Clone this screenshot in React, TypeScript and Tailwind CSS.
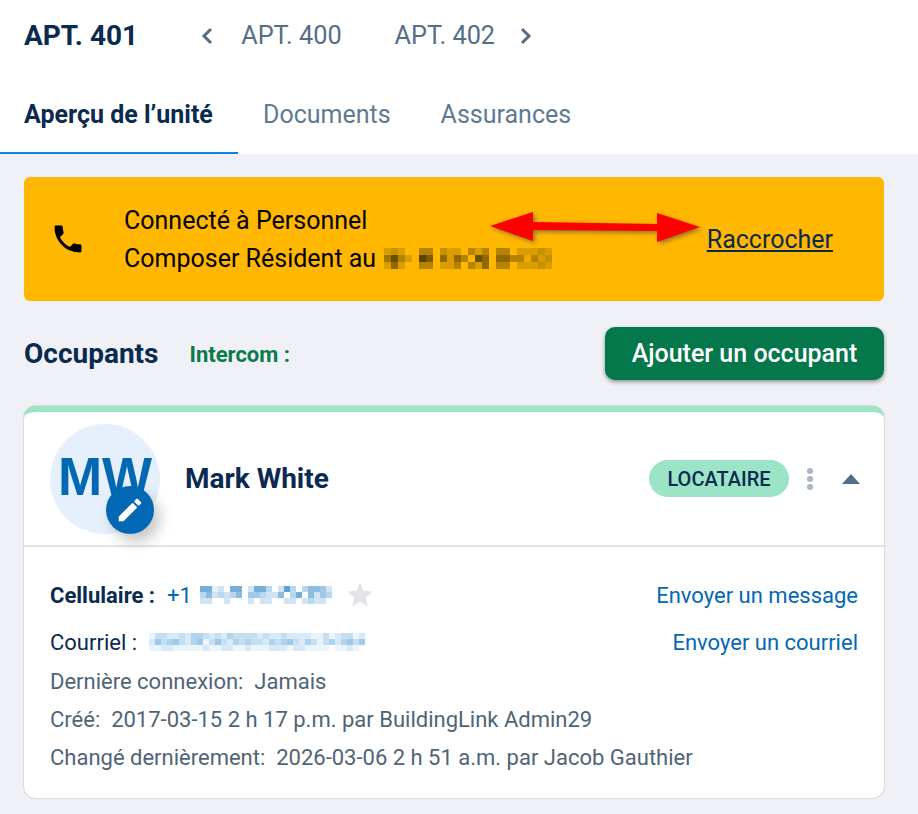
const NAVY = "text-[#0b2a4f]";

// blurred-out values in the screenshot: each digit is the strength of one cell
function Pixels({ rows, cell, color, className }: { rows: string[]; cell: number; color: string; className?: string }) {
  const w = rows[0].length * cell;
  const h = rows.length * cell;
  return (
    <svg width={w} height={h} viewBox={`0 0 ${w} ${h}`} className={className} shapeRendering="crispEdges">
      {rows.map((row, y) =>
        row.split("").map((c, x) => (
          <rect key={`${x}-${y}`} x={x * cell} y={y * cell} width={cell} height={cell} fill={color} opacity={Number(c) / 9} />
        ))
      )}
    </svg>
  );
}

function Arrow() {
  return (
    <svg
      width="214"
      height="34"
      viewBox="0 0 214 34"
      className="absolute left-[466px] top-[35px] drop-shadow-[2px_2px_2px_rgba(60,60,80,0.55)]"
    >
      <path d="M0 14 L43 0 V10 L167 12 V1 L210 15 L167 30 V19 L43 18 V29 Z" fill="#ff0000" />
    </svg>
  );
}

export default function App() {
  return (
    <div className="w-[918px] h-[814px] overflow-hidden bg-[#eff1f6] font-['Roboto',sans-serif]">
      {/* Header */}
      <div className="bg-white h-[154px]">
        <div className="flex items-center h-[72px] pl-6">
          <h1 className={`text-[28px] font-bold ${NAVY}`}>APT. 401</h1>
          <svg width="24" height="24" viewBox="0 0 24 24" fill="none" stroke="#546e85" strokeWidth="3" className="ml-[58px]">
            <path d="M15 5 L8 12 L15 19" />
          </svg>
          <span className="ml-[21px] text-[25.3px] text-[#546e85]">APT. 400</span>
          <span className="ml-[53px] text-[25.3px] text-[#546e85]">APT. 402</span>
          <svg width="24" height="24" viewBox="0 0 24 24" fill="none" stroke="#546e85" strokeWidth="3" className="ml-[18px]">
            <path d="M9 5 L16 12 L9 19" />
          </svg>
        </div>
        <div className="flex h-[82px]">
          <div className={`w-[238px] pl-6 pt-6 border-b-2 border-[#0a84e0] text-[25px] font-bold ${NAVY}`}>
            Aperçu de l’unité
          </div>
          <div className="ml-[25px] pt-6 text-[25px] text-[#5f7a90]">Documents</div>
          <div className="ml-[50px] pt-6 text-[25px] text-[#5f7a90]">Assurances</div>
        </div>
      </div>

      <div className="pl-6 pr-[34px] pt-[23px]">
        {/* Call banner */}
        <div className="relative flex items-center h-[124px] rounded-md bg-[#ffb700] pl-[26px] pr-[51px]">
          <svg width="36" height="36" viewBox="0 0 24 24" fill="#000">
            <path d="M6.62 10.79c1.44 2.83 3.76 5.14 6.59 6.59l2.2-2.2c.27-.27.67-.36 1.02-.24 1.12.37 2.33.57 3.57.57.55 0 1 .45 1 1V20c0 .55-.45 1-1 1-9.39 0-17-7.61-17-17 0-.55.45-1 1-1h3.5c.55 0 1 .45 1 1 0 1.25.2 2.45.57 3.57.11.35.03.74-.25 1.02l-2.2 2.2z" />
          </svg>
          <div className="ml-[38px] pt-[1px] text-[25px] leading-[38px] text-black">
            <p>Connecté à Personnel</p>
            <p className="flex items-center">
              Composer Résident au
              <Pixels
                className="ml-2"
                cell={7}
                color="#5a4100"
                rows={["232004403220424044022232", "584209706264086066441423", "262004402240426044022232"]}
              />
            </p>
          </div>
          <a className={`ml-auto pt-[2px] text-[25px] underline ${NAVY}`}>Raccrocher</a>
          <Arrow />
        </div>

        {/* Occupants title row */}
        <div className="flex items-center h-[53px] mt-[26px]">
          <h2 className={`text-[28px] font-bold ${NAVY}`}>Occupants</h2>
          <span className="ml-[31px] pt-[1px] text-[22px] font-bold text-[#0b7a4b]">Intercom :</span>
          <button className="ml-auto w-[279px] h-[53px] rounded-[10px] bg-[#04784a] pt-[1px] text-[25px] font-medium text-white shadow-[0_2px_4px_rgba(0,0,0,0.4)]">
            Ajouter un occupant
          </button>
        </div>

        {/* Occupant card */}
        <div className="mt-[26px] h-[392px] rounded-xl border-t-[6px] border-[#9be4c6] bg-white shadow-[0_0_2px_rgba(0,0,0,0.3)]">
          <div className="flex items-center h-[135px] border-b-2 border-[#e2e3e6] pl-[26px] pr-6">
            <div className="relative flex items-center justify-center w-[110px] h-[110px] rounded-full bg-[#e5f0fc] pb-1 text-[53px] font-['Liberation_Sans',sans-serif] font-bold text-[#0368b4]">
              MW
              <div className="absolute left-[56px] top-[62px] flex items-center justify-center w-12 h-12 rounded-full bg-[#0368b4] shadow-[6px_8px_14px_rgba(0,0,0,0.22)]">
                <svg width="30" height="30" viewBox="0 0 24 24" fill="#fff">
                  <path d="M3 17.25V21h3.75L17.81 9.94l-3.75-3.75L3 17.25zM20.71 7.04c.39-.39.39-1.02 0-1.41l-2.34-2.34c-.39-.39-1.02-.39-1.41 0l-1.83 1.83 3.75 3.75 1.83-1.83z" />
                </svg>
              </div>
            </div>
            <span className={`ml-[25px] text-[28px] font-bold ${NAVY}`}>Mark White</span>
            <span className={`ml-auto flex items-center justify-center w-[140px] h-[37px] rounded-full bg-[#9be4c6] text-[20px] font-medium ${NAVY}`}>
              LOCATAIRE
            </span>
            <div className="ml-[18px] flex flex-col gap-[2px]">
              <span className="w-[6px] h-[6px] rounded-full bg-[#a9b5c6]" />
              <span className="w-[6px] h-[6px] rounded-full bg-[#a9b5c6]" />
              <span className="w-[6px] h-[6px] rounded-full bg-[#a9b5c6]" />
            </div>
            <svg width="18" height="10" viewBox="0 0 18 10" className="ml-[29px]">
              <path d="M9 0 L18 10 H0 Z" fill="#546e85" />
            </svg>
          </div>

          <div className="px-[26px] pt-[29px] text-[22px] text-[#4f6477]">
            <div className="flex items-center h-[38px]">
              <span className={`font-bold ${NAVY}`}>Cellulaire :</span>
              <span className="ml-[12px] text-[#0368b4]">+1</span>
              <Pixels
                className="ml-[8px]"
                cell={6}
                color="#2f86c9"
                rows={["6612066026630273035542", "3523235044322503605243", "2200200020220022023220"]}
              />
              <svg width="30" height="30" viewBox="0 0 24 24" fill="#e2e3e6" className="ml-[13px]">
                <path d="M12 17.27L18.18 21l-1.64-7.03L22 9.24l-7.19-.61L12 2 9.19 8.63 2 9.24l5.46 4.73L5.82 21z" />
              </svg>
              <a className="ml-auto text-[#0368b4]">Envoyer un message</a>
            </div>
            <div className="flex items-center h-[38px] mt-[9px]">
              <span className={NAVY}>Courriel :</span>
              <Pixels
                className="ml-[12px]"
                cell={6}
                color="#4f9fd9"
                rows={[
                  "133223244323243333232232222113123312",
                  "253453245135324343324345324313424535",
                  "112211111211221121112221221111011210",
                ]}
              />
              <a className="ml-auto text-[#0368b4]">Envoyer un courriel</a>
            </div>
            <div className="flex flex-col mt-[2px] leading-[38px]">
              <p className="whitespace-pre">Dernière connexion:  Jamais</p>
              <p className="whitespace-pre">Créé:  2017-03-15 2 h 17 p.m. par BuildingLink Admin29</p>
              <p className="whitespace-pre">Changé dernièrement:  2026-03-06 2 h 51 a.m. par Jacob Gauthier</p>
            </div>
          </div>
        </div>
      </div>
    </div>
  );
}
